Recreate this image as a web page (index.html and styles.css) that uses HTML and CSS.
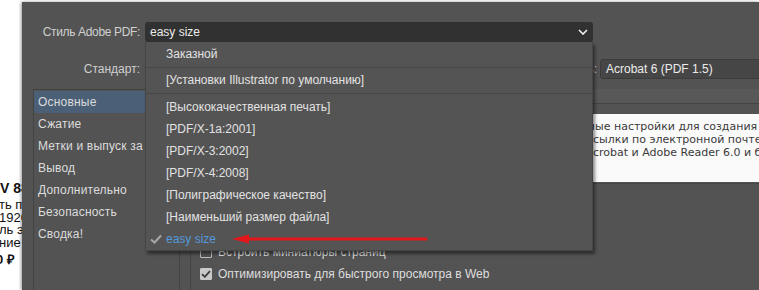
FILE: index.html
```html
<!DOCTYPE html>
<html lang="ru">
    <head>
        <meta charset="utf-8">
        <title>Сохранить Adobe PDF</title>
        <meta name="viewport" content="width=device-width,initial-scale=1">
        <link rel="stylesheet" href="styles.css">
    </head>
    <body>
        <div class="screen">
            <!-- web page behind the dialog -->
            <div class="site-edge">
                <p class="site-title">V 88"</p>
                <p class="site-line">ть превосходное</p>
                <p class="site-line">1920 x 1080</p>
                <p class="site-line">ль экрана</p>
                <p class="site-line">ние</p>
                <p class="site-price">0 ₽</p>
            </div>

            <div class="dialog">
                <div class="row row-style">
                    <span class="label">Стиль Adobe PDF:</span>
                    <div class="picker">
                        <div class="select select-style">
                            <span>easy size</span>
                            <svg class="chevron" width="10" height="6" viewBox="0 0 10 6">
                                <polyline points="1,1 5,5 9,1" fill="none" stroke="#f0f0f0" stroke-width="1.6"/>
                            </svg>
                        </div>

                        <ul class="menu">
                            <li class="menu-item lead">Заказной</li>
                            <li class="menu-item lead">[Установки Illustrator по умолчанию]</li>
                            <li class="menu-item first">[Высококачественная печать]</li>
                            <li class="menu-item">[PDF/X-1a:2001]</li>
                            <li class="menu-item">[PDF/X-3:2002]</li>
                            <li class="menu-item">[PDF/X-4:2008]</li>
                            <li class="menu-item">[Полиграфическое качество]</li>
                            <li class="menu-item">[Наименьший размер файла]</li>
                            <li class="menu-item current">
                                <svg class="tick" width="12" height="10" viewBox="0 0 12 10">
                                    <polyline points="1,5.5 4.5,8.5 11,1.5" fill="none" stroke="#a8a8a8" stroke-width="2"/>
                                </svg>
                                easy size
                            </li>
                        </ul>
                    </div>
                </div>

                <div class="row row-standard">
                    <span class="label">Стандарт:</span>
                    <div class="select select-standard">Нет</div>
                    <span class="compat-label">Совместимость:</span>
                    <div class="select select-compat">Acrobat 6 (PDF 1.5)</div>
                </div>

                <div class="dialog-body">
                    <ul class="sections">
                        <li class="selected">Основные</li>
                        <li>Сжатие</li>
                        <li>Метки и выпуск за обрез</li>
                        <li>Вывод</li>
                        <li>Дополнительно</li>
                        <li>Безопасность</li>
                        <li>Сводка!</li>
                    </ul>

                    <div class="content">
                        <div class="content-head"></div>

                        <div class="desc-row">
                            <span class="desc-label">Описание:</span>
                            <div class="desc-box">
                                <div class="desc-line"><span class="pre">Используйте данн</span>ые настройки для создания документов Adobe PDF, наиболее</div>
                                <div class="desc-line"><span class="pre pre-short">подходящих для отображения на экране, пере</span>сылки по электронной почте и публикации в Интернете.</div>
                                <div class="desc-line"><span class="pre pre-short">Созданные документы PDF можно открыть с помощью A</span>crobat и Adobe Reader 6.0 и более поздних версий.</div>
                            </div>
                        </div>

                        <div class="group">
                            <div class="group-title">Параметры</div>
                            <div class="check"><span class="box"></span>Сохранить возможность редактирования в Illustrator</div>
                            <div class="check"><span class="box"></span>Встроить миниатюры страниц</div>
                            <div class="check">
                                <span class="box checked">
                                    <svg width="10" height="8" viewBox="0 0 10 8">
                                        <polyline points="1,4.2 3.8,6.8 9,1.2" fill="none" stroke="#3c3c3c" stroke-width="1.8"/>
                                    </svg>
                                </span>
                                Оптимизировать для быстрого просмотра в Web
                            </div>
                        </div>
                    </div>
                </div>

                <!-- red annotation arrow -->
                <svg class="arrow" width="196" height="12" viewBox="0 0 196 12">
                    <line x1="14" y1="6" x2="194" y2="6" stroke="#e3161c" stroke-width="3" stroke-linecap="round"/>
                    <polygon points="0,6 17,1.5 17,10.5" fill="#e3161c"/>
                </svg>
            </div>
        </div>
    </body>
</html>
```

FILE: styles.css
```css
body {
    margin: 0;
    background-color: #fff;
    font-family: "Liberation Sans", Arial, sans-serif;
}

.screen {
    display: flex;
    width: 759px;
    height: 290px;
    padding-top: 2px;
    box-sizing: border-box;
    overflow: hidden;
}

/* page behind */
.site-edge {
    flex: none;
    width: 22px;
    overflow: hidden;
    padding-top: 178px;
    white-space: nowrap;
    color: #111;
    font-size: 13px;
}
.site-edge p {
    margin: 0;
}
.site-title {
    font-weight: bold;
    font-size: 14px;
    line-height: 16px;
    margin-bottom: 3px !important;
}
.site-line {
    line-height: 12.5px;
    text-indent: -1px;
}
.site-price {
    font-weight: bold;
    line-height: 16px;
    margin-top: 3px !important;
    text-indent: -4px;
}

/* dialog */
.dialog {
    flex: 1;
    position: relative;
    background-color: #535353;
    box-shadow: -1px 0 3px rgba(0, 0, 0, 0.4);
    color: #cfcfcf;
    font-size: 12px;
    overflow: hidden;
    white-space: nowrap;
}

.row {
    display: flex;
    align-items: center;
    height: 20px;
}
.row-style {
    margin-top: 20px;
    position: relative;
    z-index: 2;
}
.row-standard {
    margin-top: 17px;
}

.label {
    flex: none;
    width: 123px;
    padding-right: 5px;
    box-sizing: border-box;
    text-align: right;
}
.row-style .label {
    letter-spacing: -0.35px;
}

.picker {
    position: relative;
}

.select {
    display: flex;
    align-items: center;
    height: 20px;
    box-sizing: border-box;
    border-radius: 3px;
    padding: 0 5px;
    color: #ececec;
}
.select-style {
    width: 448px;
    justify-content: space-between;
    background-color: #313131;
}
.select-standard {
    flex: none;
    width: 300px;
    background-color: #3c3c3c;
}
.compat-label {
    flex: none;
    width: 152px;
    text-align: right;
}
.select-compat {
    flex: none;
    width: 200px;
    margin-left: 3px;
    background-color: #464646;
    border: 1px solid #3b3b3b;
}

/* dropdown */
.menu {
    position: absolute;
    top: 20px;
    left: 0;
    width: 448px;
    box-sizing: border-box;
    margin: 0;
    padding: 0;
    list-style: none;
    background-color: #545454;
    border: 1px solid #464646;
    border-top: none;
    box-shadow: 2px 3px 3px rgba(0, 0, 0, 0.45);
}
.menu-item {
    position: relative;
    height: 22px;
    line-height: 22px;
    padding-left: 20px;
    color: #e2e2e2;
}
.menu-item.lead {
    height: 25px;
    line-height: 25px;
    border-bottom: 1px solid #474747;
}
.menu-item.first {
    margin-top: 2px;
}
.menu-item.current {
    color: #5598d9;
}
.tick {
    position: absolute;
    left: 4px;
    top: 6px;
}

/* body */
.dialog-body {
    display: grid;
    grid-template-columns: 147px 1fr;
    column-gap: 10px;
    height: 201px;
    margin: 10px 0 0 11px;
}

.sections {
    margin: 0;
    padding: 1px 0 0;
    list-style: none;
    border: 1px solid #434343;
    border-bottom: none;
    overflow: hidden;
    color: #dcdcdc;
}
.sections li {
    height: 22px;
    line-height: 22px;
    padding-left: 4px;
    letter-spacing: 0.2px;
}
.sections li.selected {
    background-color: #4b5f77;
}

.content-head {
    height: 14px;
    background-color: #585858;
    border-bottom: 1px solid #444;
}

.desc-row {
    display: flex;
    padding: 10px 0 1px;
    border-bottom: 1px solid #474747;
}
.desc-label {
    flex: none;
    width: 80px;
    padding-top: 4px;
}
.desc-box {
    flex: 1;
    height: 68px;
    box-sizing: border-box;
    padding: 6px 0 0 6px;
    background-color: #fafafa;
    color: #3a3a3a;
    font-family: "DejaVu Sans", Verdana, sans-serif;
    font-size: 11px;
    line-height: 13px;
    overflow: hidden;
}
.desc-line {
    display: flex;
}
.pre {
    flex: none;
    display: flex;
    justify-content: flex-end;
    width: 319px;
    overflow: hidden;
}
.pre-short {
    width: 317px;
}

.group {
    height: 100%;
    padding: 13px 0 0 9px;
    border-left: 1px solid #444;
}
.group-title {
    height: 22px;
    line-height: 22px;
}
.check {
    display: flex;
    align-items: center;
    gap: 6px;
    height: 22px;
    color: #dedede;
}
.box {
    flex: none;
    display: flex;
    align-items: center;
    justify-content: center;
    width: 12px;
    height: 12px;
    box-sizing: border-box;
    border: 1px solid #bdbdbd;
    border-radius: 1px;
}
.box.checked {
    background-color: #c9c9c9;
    border-color: #c9c9c9;
}

.arrow {
    position: absolute;
    left: 210px;
    top: 231px;
    z-index: 3;
}
```
